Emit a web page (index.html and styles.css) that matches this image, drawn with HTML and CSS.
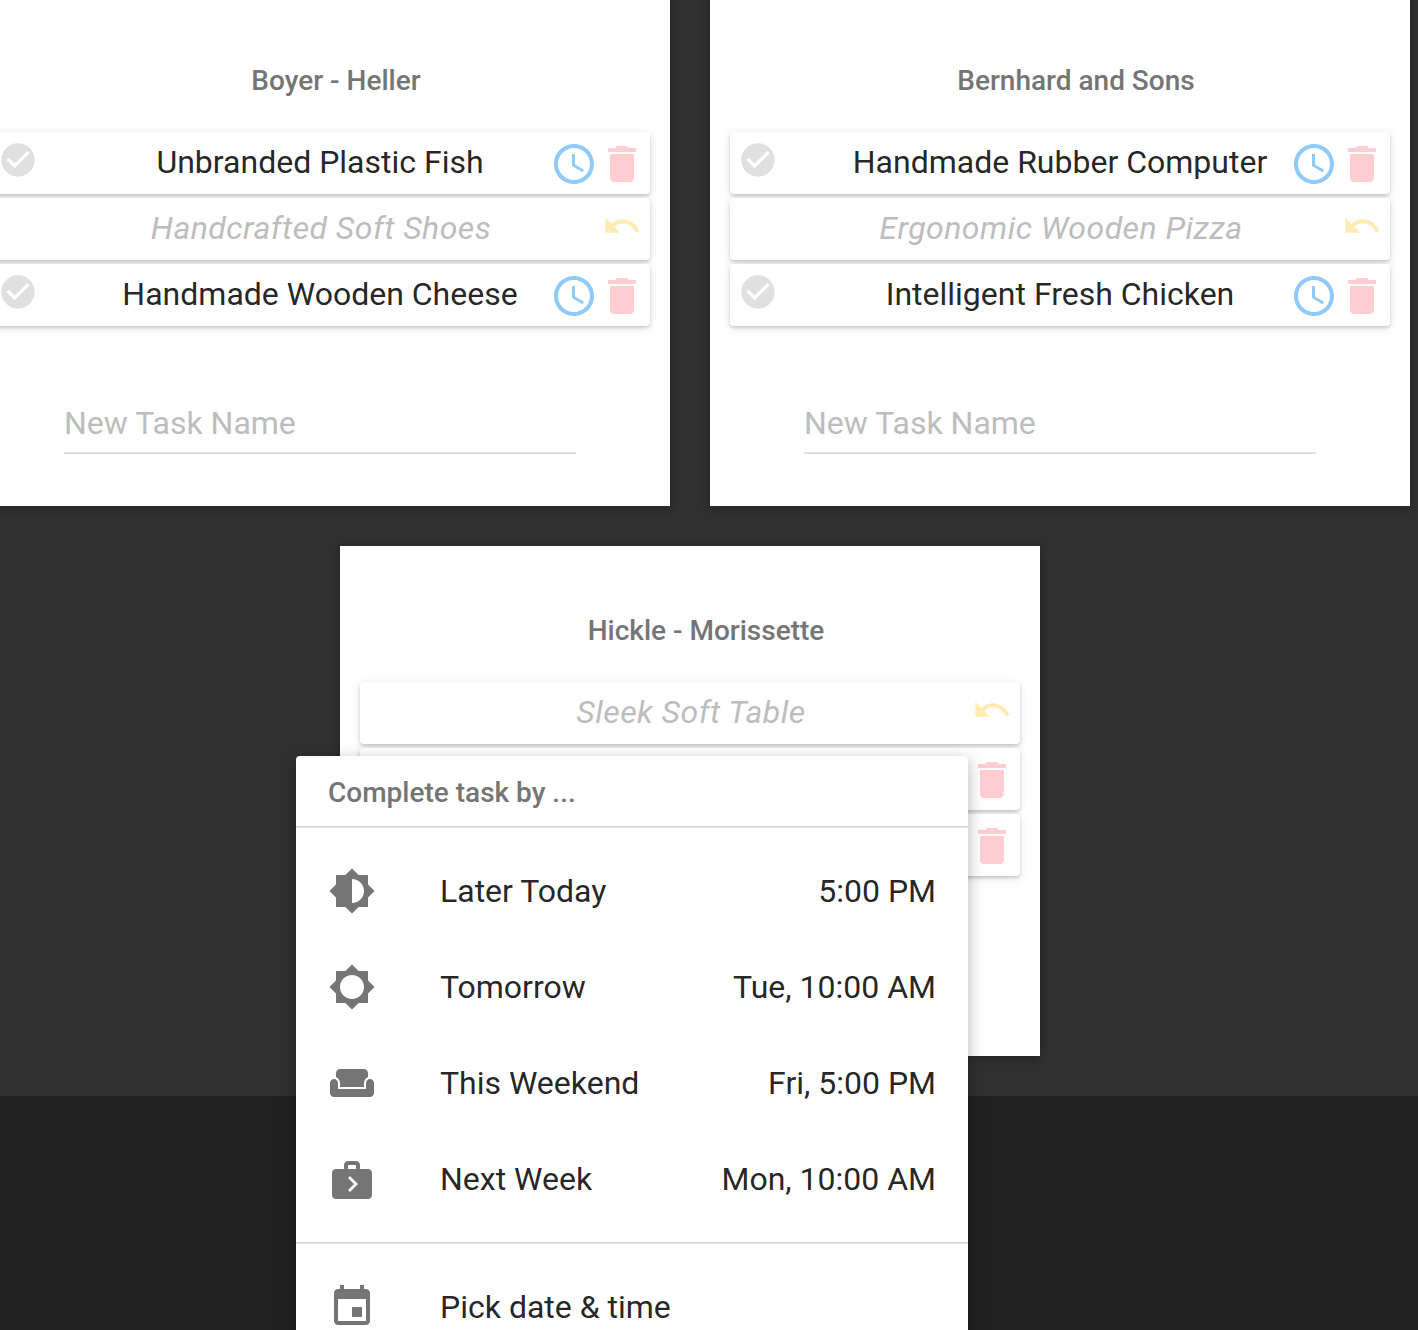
FILE: index.html
```html
<!doctype html>
<html>
<head>
    <title>Tasks</title>
    <link rel="stylesheet" href="styles.css">
    <meta name="viewport" content="width=device-width, initial-scale=1.0">
</head>
<body>
    <svg class="icon-sprite" xmlns="http://www.w3.org/2000/svg">
        <symbol id="i-check" viewBox="0 0 24 24"><path d="M12 2C6.48 2 2 6.48 2 12s4.48 10 10 10 10-4.48 10-10S17.52 2 12 2zm-2 15l-5-5 1.41-1.41L10 14.17l7.59-7.59L19 8l-9 9z"/></symbol>
        <symbol id="i-clock" viewBox="0 0 24 24"><path d="M11.99 2C6.47 2 2 6.48 2 12s4.47 10 9.99 10C17.52 22 22 17.52 22 12S17.52 2 11.99 2zM12 20c-4.42 0-8-3.58-8-8s3.58-8 8-8 8 3.58 8 8-3.58 8-8 8zm.5-13H11v6l5.25 3.15.75-1.23-4.5-2.67z"/></symbol>
        <symbol id="i-trash" viewBox="0 0 24 24"><path d="M6 19c0 1.1.9 2 2 2h8c1.1 0 2-.9 2-2V7H6v12zM19 4h-3.5l-1-1h-5l-1 1H5v2h14V4z"/></symbol>
        <symbol id="i-undo" viewBox="0 0 24 24"><path d="M12.5 8c-2.65 0-5.05.99-6.9 2.6L2 7v9h9l-3.62-3.62c1.39-1.16 3.16-1.88 5.12-1.88 3.54 0 6.55 2.31 7.6 5.5l2.37-.78C21.08 11.03 17.15 8 12.5 8z"/></symbol>
        <symbol id="i-later" viewBox="0 0 24 24"><path d="M20 15.31L23.31 12 20 8.69V4h-4.69L12 .69 8.69 4H4v4.69L.69 12 4 15.31V20h4.69L12 23.31 15.31 20H20v-4.69zM12 18V6c3.31 0 6 2.69 6 6s-2.69 6-6 6z"/></symbol>
        <symbol id="i-tomorrow" viewBox="0 0 24 24"><path d="M20 15.31L23.31 12 20 8.69V4h-4.69L12 .69 8.69 4H4v4.69L.69 12 4 15.31V20h4.69L12 23.31 15.31 20H20v-4.69zM12 18c-3.31 0-6-2.69-6-6s2.69-6 6-6 6 2.69 6 6-2.69 6-6 6z"/></symbol>
        <symbol id="i-weekend" viewBox="0 0 24 24"><path d="M21 10c-1.1 0-2 .9-2 2v3H5v-3c0-1.1-.9-2-2-2s-2 .9-2 2v5c0 1.1.9 2 2 2h18c1.1 0 2-.9 2-2v-5c0-1.1-.9-2-2-2zm-3-5H6c-1.1 0-2 .9-2 2v2.15c1.16.41 2 1.52 2 2.82V14h12v-2.03c0-1.3.84-2.4 2-2.82V7c0-1.1-.9-2-2-2z"/></symbol>
        <symbol id="i-nextweek" viewBox="0 0 24 24"><path d="M20 7h-4V5c0-.55-.22-1.05-.59-1.41C15.05 3.22 14.55 3 14 3h-4c-1.1 0-2 .9-2 2v2H4c-1.1 0-2 .9-2 2v11c0 1.1.9 2 2 2h16c1.1 0 2-.9 2-2V9c0-1.1-.9-2-2-2zM10 5h4v2h-4V5zm1 13.5l-1-1 3-3-3-3 1-1 4 4-4 4z"/></symbol>
        <symbol id="i-event" viewBox="0 0 24 24"><path d="M17 12h-5v5h5v-5zM16 1v2H8V1H6v2H5c-1.11 0-1.99.9-1.99 2L3 19c0 1.1.89 2 2 2h14c1.1 0 2-.9 2-2V5c0-1.1-.9-2-2-2h-1V1h-2zm3 18H5V8h14v11z"/></symbol>
    </svg>

    <div class="board">
        <section class="card">
            <h2 class="card-title">Boyer - Heller</h2>
            <div class="task">
                <div class="task-left"><svg class="icon icon-check"><use href="#i-check"/></svg></div>
                <div class="task-name">Unbranded Plastic Fish</div>
                <div class="task-right"><svg class="icon icon-clock"><use href="#i-clock"/></svg><svg class="icon icon-trash"><use href="#i-trash"/></svg></div>
            </div>
            <div class="task task-done">
                <div class="task-left"></div>
                <div class="task-name">Handcrafted Soft Shoes</div>
                <div class="task-right"><svg class="icon icon-undo"><use href="#i-undo"/></svg></div>
            </div>
            <div class="task">
                <div class="task-left"><svg class="icon icon-check"><use href="#i-check"/></svg></div>
                <div class="task-name">Handmade Wooden Cheese</div>
                <div class="task-right"><svg class="icon icon-clock"><use href="#i-clock"/></svg><svg class="icon icon-trash"><use href="#i-trash"/></svg></div>
            </div>
            <input class="new-task" type="text" placeholder="New Task Name">
        </section>

        <section class="card">
            <h2 class="card-title">Bernhard and Sons</h2>
            <div class="task">
                <div class="task-left"><svg class="icon icon-check"><use href="#i-check"/></svg></div>
                <div class="task-name">Handmade Rubber Computer</div>
                <div class="task-right"><svg class="icon icon-clock"><use href="#i-clock"/></svg><svg class="icon icon-trash"><use href="#i-trash"/></svg></div>
            </div>
            <div class="task task-done">
                <div class="task-left"></div>
                <div class="task-name">Ergonomic Wooden Pizza</div>
                <div class="task-right"><svg class="icon icon-undo"><use href="#i-undo"/></svg></div>
            </div>
            <div class="task">
                <div class="task-left"><svg class="icon icon-check"><use href="#i-check"/></svg></div>
                <div class="task-name">Intelligent Fresh Chicken</div>
                <div class="task-right"><svg class="icon icon-clock"><use href="#i-clock"/></svg><svg class="icon icon-trash"><use href="#i-trash"/></svg></div>
            </div>
            <input class="new-task" type="text" placeholder="New Task Name">
        </section>

        <section class="card">
            <h2 class="card-title">Hickle - Morissette</h2>
            <div class="task task-done">
                <div class="task-left"></div>
                <div class="task-name">Sleek Soft Table</div>
                <div class="task-right"><svg class="icon icon-undo"><use href="#i-undo"/></svg></div>
            </div>
            <div class="task">
                <div class="task-left"></div>
                <div class="task-name"></div>
                <div class="task-right"><svg class="icon icon-trash"><use href="#i-trash"/></svg></div>
            </div>
            <div class="task">
                <div class="task-left"></div>
                <div class="task-name"></div>
                <div class="task-right"><svg class="icon icon-trash"><use href="#i-trash"/></svg></div>
            </div>
            <input class="new-task" type="text" placeholder="New Task Name">
        </section>
    </div>

    <div class="picker">
        <div class="picker-head">Complete task by ...</div>
        <ul class="picker-list">
            <li class="picker-item"><svg class="icon icon-menu"><use href="#i-later"/></svg><span class="picker-label">Later Today</span><span class="picker-time">5:00 PM</span></li>
            <li class="picker-item"><svg class="icon icon-menu"><use href="#i-tomorrow"/></svg><span class="picker-label">Tomorrow</span><span class="picker-time">Tue, 10:00 AM</span></li>
            <li class="picker-item"><svg class="icon icon-menu"><use href="#i-weekend"/></svg><span class="picker-label">This Weekend</span><span class="picker-time">Fri, 5:00 PM</span></li>
            <li class="picker-item"><svg class="icon icon-menu"><use href="#i-nextweek"/></svg><span class="picker-label">Next Week</span><span class="picker-time">Mon, 10:00 AM</span></li>
        </ul>
        <ul class="picker-list">
            <li class="picker-item"><svg class="icon icon-menu"><use href="#i-event"/></svg><span class="picker-label">Pick date &amp; time</span></li>
        </ul>
    </div>
</body>
</html>
```

FILE: styles.css
```css
html, body {
    height: 100%;
    overflow: hidden;
}
body {
    margin: 0;
    padding: 0;
    background-color: #212121;
    font-family: Roboto, "Liberation Sans", sans-serif;
    color: rgba(0, 0, 0, 0.87);
}
.icon-sprite {
    display: none;
}
.board {
    display: flex;
    flex-wrap: wrap;
    justify-content: center;
    align-content: flex-start;
    width: 1480px;
    height: 1120px;
    margin: -24px 0 0 -50px;
    background-color: #303030;
}
.card {
    box-sizing: border-box;
    width: 700px;
    height: 510px;
    margin: 20px;
    padding: 0 20px;
    background-color: #fff;
    box-shadow: 0 2px 10px rgba(0, 0, 0, 0.3);
}
.card-title {
    margin: 0 0 31px;
    padding: 65px 0 0 32px;
    font-size: 28px;
    font-weight: 500;
    line-height: 40px;
    text-align: center;
    color: #757575;
}
.task {
    display: grid;
    grid-template-columns: 1fr auto 1fr;
    align-items: center;
    height: 62px;
    margin-bottom: 4px;
    background-color: #fff;
    border-radius: 4px;
    box-shadow: 0 2px 8px rgba(0, 0, 0, 0.12), 0 2px 3px rgba(0, 0, 0, 0.14);
}
.task-name {
    font-size: 32px;
    line-height: 60px;
    padding-bottom: 2px;
    white-space: nowrap;
}
.task-done .task-name {
    padding-left: 2px;
    line-height: 61px;
    padding-bottom: 1px;
    letter-spacing: 0.47px;
    font-style: italic;
    color: #bdbdbd;
}
.task-left {
    display: flex;
    align-self: start;
    padding: 8px 0 0 8px;
}
.task-right {
    display: flex;
    justify-content: flex-end;
    align-self: start;
    padding: 8px 4px 0 0;
}
.icon {
    display: block;
    flex: none;
    width: 48px;
    height: 48px;
    fill: currentColor;
}
.icon-check {
    width: 40px;
    height: 40px;
    color: #e0e0e0;
}
.icon-clock {
    color: #90caf9;
}
.icon-trash {
    color: #ffcdd2;
}
.icon-undo {
    width: 40px;
    height: 40px;
    margin-right: 4px;
    color: #ffecb3;
}
.new-task {
    display: block;
    box-sizing: border-box;
    width: 512px;
    height: 58px;
    margin: 70px auto 0;
    padding: 0 0 2px;
    border: 0;
    border-bottom: 2px solid #e0e0e0;
    outline: none;
    background: transparent;
    font-family: inherit;
    font-size: 32px;
}
.new-task::placeholder {
    color: #bdbdbd;
    opacity: 1;
}
.picker {
    position: absolute;
    top: 756px;
    left: 296px;
    width: 672px;
    background-color: #fff;
    border-radius: 4px;
    box-shadow: 0 4px 16px rgba(0, 0, 0, 0.3);
}
.picker-head {
    box-sizing: border-box;
    height: 72px;
    padding: 0 32px;
    border-bottom: 2px solid #e0e0e0;
    font-size: 28px;
    font-weight: 500;
    line-height: 74px;
    color: #757575;
}
.picker-list {
    margin: 0;
    padding: 15px 0;
    list-style: none;
}
.picker-list + .picker-list {
    border-top: 2px solid #e0e0e0;
}
.picker-item {
    display: flex;
    align-items: center;
    height: 96px;
    padding: 0 32px;
    font-size: 32px;
    line-height: 94px;
}
.icon-menu {
    margin-right: 64px;
    color: #757575;
}
.picker-time {
    margin-left: auto;
}
```
